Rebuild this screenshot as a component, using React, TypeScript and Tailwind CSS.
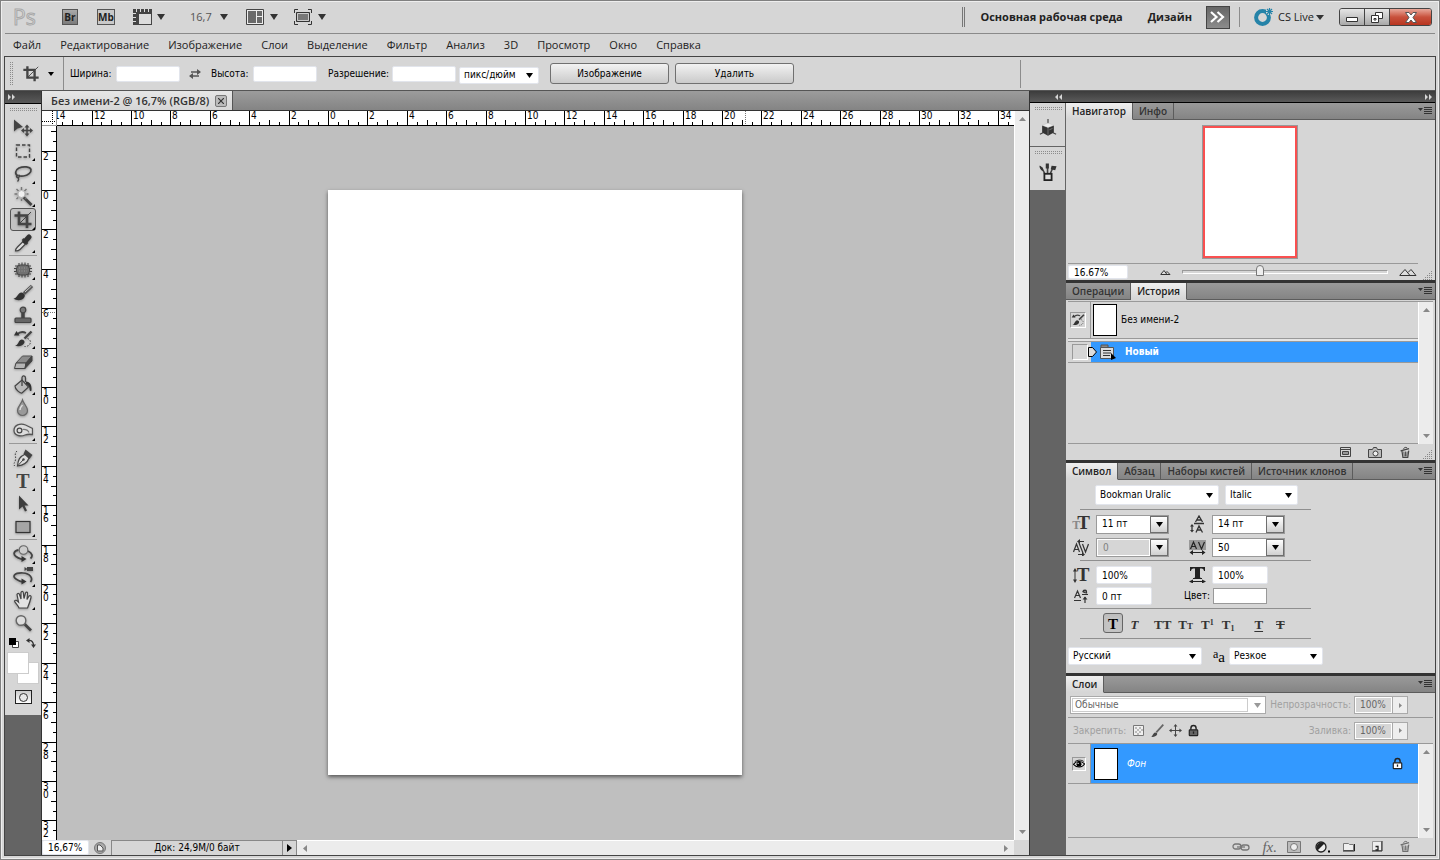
import { ReactNode, useState } from "react"
import clsx from "clsx"

const CM = 19.7
const PAGE_W = 415
const PAGE_H = 586

/* ---------- small shared pieces ---------- */

function Caret({ className = "text-[#333]", w = 7, h = 5 }: { className?: string; w?: number; h?: number }) {
  return (
    <svg width={w} height={h} viewBox="0 0 8 6" preserveAspectRatio="none" className={clsx("pointer-events-none shrink-0", className)} aria-hidden>
      <path d="M0 0h8L4 6z" fill="currentColor" />
    </svg>
  )
}

function Grip({ vertical = false }: { vertical?: boolean }) {
  return (
    <span
      className={clsx(
        "block shrink-0 bg-[linear-gradient(90deg,#d6d6d6_1px,transparent_1px),linear-gradient(#8c8c8c_1px,transparent_1px)] bg-[size:2px_2px]",
        vertical ? "h-6 w-1" : "h-[3px] w-7"
      )}
    />
  )
}

function Rule({ className = "h-6" }: { className?: string }) {
  return <span className={clsx("w-px shrink-0 bg-[#8c8c8c]", className)} />
}

function Field({ label, value = "", className }: { label: string; value?: string; className?: string }) {
  return (
    <input
      type="text"
      aria-label={label}
      defaultValue={value}
      className={clsx("shrink-0 rounded-[2px] border border-[#e2e5ec] bg-white px-[5px] text-black outline-none", className)}
    />
  )
}

function Select({ label, value, options = [], className, caret = "right-[5px]" }: {
  label: string
  value: string
  options?: string[]
  className?: string
  caret?: string
}) {
  return (
    <span className={clsx("relative flex shrink-0 items-center rounded-[2px] border border-[#e2e5ec] bg-white", className)}>
      <select aria-label={label} defaultValue={value} className="h-full w-full appearance-none bg-transparent pl-1 text-black outline-none">
        {[value, ...options].map((o) => (
          <option key={o}>{o}</option>
        ))}
      </select>
      <Caret className={clsx("absolute text-black", caret)} />
    </span>
  )
}

function Combo({ label, value, disabled = false }: { label: string; value: string; disabled?: boolean }) {
  return (
    <span className="flex h-[19px] w-[73px] shrink-0 border border-[#9a9a9a] bg-white">
      <input
        type="text"
        aria-label={label}
        defaultValue={value}
        disabled={disabled}
        className={clsx("min-w-0 flex-1 pl-[5px] outline-none", disabled ? "border border-white bg-[#d6d6d6] text-[#808080]" : "text-black")}
      />
      <button aria-label={label + ": список"} className="flex w-[18px] items-center justify-center border border-[#6e6e6e] bg-gradient-to-b from-white to-[#d0d0d0]">
        <Caret className="text-black" />
      </button>
    </span>
  )
}

function ScrollColumn({ className }: { className?: string }) {
  return (
    <div className={clsx("flex w-[15px] shrink-0 flex-col items-center justify-between border-l border-white bg-[#ececec] py-[6px]", className)}>
      <button aria-label="Вверх" className="text-[#888]">
        <svg width="7" height="4" viewBox="0 0 7 4" className="block"><path d="M0 4h7L3.5 0z" fill="currentColor" /></svg>
      </button>
      <button aria-label="Вниз" className="text-[#888]">
        <svg width="7" height="4" viewBox="0 0 7 4" className="block"><path d="M0 0h7L3.5 4z" fill="currentColor" /></svg>
      </button>
    </div>
  )
}

function Icon({ size = 20, children, className }: { size?: number; children: ReactNode; className?: string }) {
  return (
    <svg width={size} height={size} viewBox="0 0 20 20" fill="none" stroke="#444" strokeWidth="1.5" className={clsx("block shrink-0", className)} aria-hidden>
      {children}
    </svg>
  )
}

/* ---------- icons ---------- */

const cropArt = (
  <>
    <path d="M6 1.5V14h12.5M1.5 5.5H14V18" strokeWidth="2.600" />
    <path d="M6 14 18 2" strokeWidth="1" />
  </>
)

const brushHistoryArt = (
  <>
    <path d="M18.5 2.5 11.5 9.5" strokeWidth="2.4" />
    <path d="M2 16.5c3.5 0 3-5 6.500-6 2 0 3.500 1.500 3 3-1 3.500-6.500 4.500-9.500 3z" fill="#333" stroke="none" />
    <path d="M4 5.500c2.500-2.500 6-3 9-1.500" strokeWidth="1.800" />
    <path d="M1 6.500 3.500 2l3 4.500z" fill="#333" stroke="none" />
    <path d="M14.500 9.500c3.500 1 4 5 1 7-1.500 1-3 1.200-4 1" strokeWidth="1" strokeDasharray="1.500 1.500" />
  </>
)

const trashArt = (
  <>
    <path d="M4.500 7 6 17.500h7.500L15 7" fill="#ddd" strokeWidth="1.800" />
    <path d="M7.500 8.500 8 16M10 8.500V16M12.500 8.500 12 16" strokeWidth="1.400" />
    <path d="m2.500 7.500 13-3.500" strokeWidth="2.200" />
    <path d="M7 5c0-3 5-4 5.500-1.500" />
  </>
)

const lockArt = (
  <>
    <rect x="3.500" y="9" width="13" height="9" rx="1" fill="currentColor" stroke="#222" strokeWidth="1.800" />
    <path d="M6 9V6.500C6 1 14 1 14 6.500V9" stroke="#222" strokeWidth="2.200" />
    <path d="M10 11.500v3.500" stroke="#222" strokeWidth="2" />
  </>
)

type Tool = { name: string; art: ReactNode; more?: boolean }

const toolGroups: Tool[][] = [
  [
    {
      name: "Перемещение",
      more: false,
      art: (
        <>
          <path d="M1 1.500v12l3.500-3L10 9z" fill="#444" stroke="none" />
          <path d="M9.500 12.500h9M14 8v9" strokeWidth="1.500" />
          <path d="m14 6.500 2.500 3h-5zM14 18.500l2.500-3h-5zM8 12.500l3-2.500v5zM20 12.500 17 10v5z" fill="#444" stroke="none" />
        </>
      ),
    },
    { name: "Прямоугольная область", art: <rect x="3.500" y="4" width="13" height="12" strokeDasharray="3.500 2" strokeWidth="1.400" /> },
    {
      name: "Лассо",
      art: (
        <>
          <path d="M5 12c-3.500-2-3-6 1-8 4.500-2 11-1.500 12 1.500.5 3-3 6-7.500 6.500-2 .3-4 0-5-.5" strokeWidth="1.700" />
          <path d="M5.500 11c1.500.5 1 2.500-.5 2.500S3 12 4 11.500M4.500 13.500c2 1 1 3 0 4" strokeWidth="1.400" />
        </>
      ),
    },
    {
      name: "Волшебная палочка",
      art: (
        <>
          <path d="m10.500 10 8 8" strokeWidth="2.800" />
          <path d="M8.500 0v14M1.500 7h14M3.500 2l10 10M13.500 2l-10 10" stroke="#777" strokeWidth="1.400" strokeDasharray="3 1" />
          <circle cx="8.500" cy="7" r="3.500" fill="#f0f0f0" stroke="#bbb" strokeWidth="1" />
        </>
      ),
    },
    { name: "Рамка", art: cropArt },
    {
      name: "Пипетка",
      art: (
        <>
          <path d="M2.500 18c0-2 1-3 2-4l6-6 2.500 2.500-6 6c-1 1-2.500 1.500-4.500 1.500z" fill="#ddd" strokeWidth="1.200" />
          <path d="m9.500 6 5 5" strokeWidth="2.500" />
          <path d="m12 8.500 4-4.500" strokeWidth="5" strokeLinecap="round" stroke="#333" />
        </>
      ),
    },
  ],
  [
    {
      name: "Точечная восстанавливающая кисть",
      art: (
        <>
          <path d="M6 3v14M9 2.500v15M12 2.500v15M15 3v14M1 8.500h18M1 11.500h18M2 6h16M2 14h16" strokeWidth="1.100" />
          <rect x="3.500" y="5" width="13" height="10" rx="4" fill="#707070" stroke="#444" strokeWidth="1" />
          <path d="M6 8h8M6 11h8" stroke="#999" strokeWidth="1" strokeDasharray="1 1.500" />
        </>
      ),
    },
    {
      name: "Кисть",
      art: (
        <>
          <path d="M19 3 11 10.500" strokeWidth="3.200" stroke="#555" />
          <path d="M18.500 3 12 9" strokeWidth="1" stroke="#ccc" />
          <path d="M.5 15.500c4 0 4-6 8-6 2.800.5 4 2.500 3 4.500-2 4-8 4-11 1.500z" fill="#333" stroke="none" />
        </>
      ),
    },
    {
      name: "Штамп",
      art: (
        <>
          <circle cx="10" cy="4" r="2.800" fill="#777" strokeWidth="1.200" />
          <path d="M8.800 7v5h2.400V7" fill="#444" strokeWidth="1" />
          <rect x="2" y="12" width="16" height="4.500" rx="1" fill="#666" strokeWidth="1.200" />
        </>
      ),
    },
    { name: "Архивная кисть", art: brushHistoryArt },
    {
      name: "Ластик",
      art: (
        <>
          <path d="M9.500 4h9.500l-6 7H3z" fill="#8c8c8c" stroke="#555" strokeWidth="1" />
          <path d="M3 11h10l-1 5.500H1.500z" fill="#b5b5b5" stroke="#444" strokeWidth="1" />
          <path d="m13 11 6-7v5L12 16.500z" fill="#444" stroke="#444" strokeWidth="1" />
        </>
      ),
    },
    {
      name: "Заливка",
      art: (
        <>
          <path d="m2 11 7-6 6.500 7-6.500 6c-2 .5-7-4-7-7z" fill="#bbb" strokeWidth="1.200" />
          <path d="M9 11V3c0-3 3.500-2.500 3.500 0v4" strokeWidth="1.300" />
          <path d="M13 6.500c4 0 6 3.500 5.500 9-1 1.500-2 0-2-1.500 0-2-1-4-3.500-5z" fill="#333" stroke="none" />
        </>
      ),
    },
    {
      name: "Размытие",
      art: (
        <>
          <path d="M9.500 2c1 3.500 5 6.500 5 10.500a5 5 0 0 1-10 0C4.500 8.500 8.500 5.500 9.500 2z" fill="#999" stroke="#666" strokeWidth="1.200" />
          <path d="M7 12c0-2 1.500-4 2.500-5" stroke="#ddd" />
        </>
      ),
    },
    {
      name: "Осветлитель",
      art: (
        <>
          <path d="M1 9.500c0-5 6-8 11.500-5.500 3 1.500 5 2.500 7 3.500v6c-3-.5-5-.5-7.500.5C7.500 16 1 14.500 1 9.500z" fill="#dcdcdc" strokeWidth="1.300" stroke="#555" />
          <circle cx="6.500" cy="9.500" r="2.400" strokeWidth="1.200" />
          <path d="M9.500 8.500c3-.3 5.500.7 6.500 3" strokeWidth="1.200" stroke="#777" />
        </>
      ),
    },
  ],
  [
    {
      name: "Перо",
      art: (
        <>
          <path d="M4.500 18c.5-6 2-9.500 8-12l3.500 4c-2 5.500-6 7.500-11.500 8z" fill="#ddd" strokeWidth="1.200" />
          <path d="m12.500 1.500 7 5.500-3 4-6-5z" fill="#444" stroke="none" />
          <path d="M5 17.500 10 12" strokeWidth="1" />
          <circle cx="10.500" cy="11.500" r="1.200" fill="#444" stroke="none" />
          <path d="M4 3C.5 6 3.500 9 2.500 12s-2 3-1 6" strokeWidth="1" strokeDasharray="1.500 1.500" />
        </>
      ),
    },
    { name: "Текст", art: null },
    { name: "Выделение контура", art: <path d="M6 1.500v14l3.500-3 2.500 5 2-1-2.500-5h4z" fill="#3c3c3c" stroke="none" /> },
    { name: "Прямоугольник", art: <rect x="3" y="4.500" width="14" height="11" fill="#a5a5a5" stroke="#333" strokeWidth="1.200" /> },
  ],
  [
    {
      name: "Поворот 3D-объекта",
      art: (
        <>
          <path d="M5.500 6C.5 7 0 10 3 12.500s7 3 8 2.500M15 7c4.500 2 5 5.500 2.500 7.500" strokeWidth="1.800" />
          <path d="M8.500 12 13.500 15l-5 3z" fill="#333" stroke="none" />
          <circle cx="10.500" cy="6" r="4.300" fill="#cdcdcd" stroke="#666" strokeWidth="1.100" />
        </>
      ),
    },
    {
      name: "Поворот 3D-камеры",
      art: (
        <>
          <path d="M10 6C1 5.500-1 9.500 3 12s7 3 8 2.500M10 6c7 .5 10.500 5 7.500 9" strokeWidth="1.700" />
          <path d="m8.500 11.500 5 3-5 3z" fill="#333" stroke="none" />
          <rect x="14" y="0" width="6" height="4" fill="#444" stroke="none" />
          <path d="m11.500 0 3 2-3 2z" fill="#444" stroke="none" />
        </>
      ),
    },
    {
      name: "Рука",
      art: (
        <path
          d="M6 18c-1-3-3.500-4.500-4.500-7 1-1.500 2.500-.5 4 1L4 4.500c.5-1.500 2-1.500 2.500 0L8 9V2.500c.5-1.500 2-1.500 2.300 0L11 8.500l1.500-5.500c.7-1.500 2.300-1 2 .5L14 9.500l2-3.500c1-1 2.500-.3 2 1.500-.7 3-2 7-3.500 10.500z"
          fill="#e2e2e2"
          strokeWidth="1.200"
        />
      ),
    },
    {
      name: "Масштаб",
      more: false,
      art: (
        <>
          <path d="m11.500 11 6.500 6.500" strokeWidth="2.800" />
          <circle cx="8" cy="7.500" r="4.800" fill="#ddd" stroke="#666" strokeWidth="1.400" />
        </>
      ),
    },
  ],
]

/* ---------- top bars ---------- */

function TitleBar() {
  return (
    <div className="mx-1 flex h-[33px] shrink-0 items-center border-b border-[#8a8a8a] pl-2">
      <span className="w-[49px] text-[21px] leading-6 text-[#dedede] [-webkit-text-stroke:1px_#a8a8a8]">Ps</span>
      <button className="flex h-4 w-4 items-center justify-center border border-[#555] bg-gradient-to-b from-[#aaa] to-[#7b7b7b] text-[10px] font-bold text-[#222]">Br</button>
      <button className="ml-[19px] flex h-4 w-[18px] items-center justify-center border border-[#555] bg-[#c9c9c9] text-[10px] font-bold text-[#222]">Mb</button>
      <button aria-label="Показать элементы" className="ml-[18px] flex items-center gap-[5px]">
        <svg width="19" height="16" viewBox="0 0 19 16" aria-hidden>
          <path d="M0 0h19v16H0z" fill="#444" />
          <path d="M6 5h12v10H6z" fill="#dcdcdc" />
          <path d="M3.500 0v3M7.500 0v3M11.500 0v3M15.500 0v3M0 4.500h3M0 8.500h3M0 12.500h3" stroke="#ddd" />
        </svg>
        <Caret w={8} h={6} />
      </button>
      <button aria-label="Масштаб" className="ml-[25px] flex w-[38px] items-center justify-between text-[11px] text-[#555]">
        16,7
        <Caret w={8} h={6} />
      </button>
      <button aria-label="Упорядочить документы" className="ml-[18px] flex items-center gap-[6px]">
        <svg width="18" height="16" viewBox="0 0 18 16" aria-hidden>
          <path d="M.5.5h17v15H.5z" fill="#eee" stroke="#444" />
          <path d="M2 2h8v12H2zM11 2h5v5h-5zM11 8h5v6h-5z" fill="#6a6a6a" />
        </svg>
        <Caret w={8} h={6} />
      </button>
      <button aria-label="Режим экрана" className="ml-4 flex items-center gap-[6px]">
        <svg width="18" height="16" viewBox="0 0 18 16" fill="none" aria-hidden>
          <path d="M.5 4V.5H4M14 .5h3.500V4M17.500 12v3.500H14M4 15.500H.5V12" stroke="#333" />
          <path d="M2.500 3.500h13v9h-13z" fill="#777" stroke="#333" />
          <path d="M3.500 4.500h11v7h-11z" stroke="#ccc" />
        </svg>
        <Caret w={8} h={6} />
      </button>

      <div className="ml-auto flex items-center text-[11px] font-bold text-[#222]">
        <span className="h-5 w-[3px] border-x border-[#777]" />
        <button className="ml-[15px]">Основная рабочая среда</button>
        <button className="ml-[25px]">Дизайн</button>
        <button aria-label="Другие рабочие среды" className="ml-[14px] flex h-[23px] w-6 items-center justify-center border border-[#444] bg-gradient-to-b from-[#666] to-[#8c8c8c]">
          <svg width="15" height="12" viewBox="0 0 15 12" fill="none" stroke="#fff" strokeWidth="2.200" aria-hidden>
            <path d="m1 1 5.500 5L1 11M7.500 1 13 6l-5.500 5" />
          </svg>
        </button>
        <Rule className="ml-[9px] h-5" />
        <button className="ml-[14px] flex items-center font-normal">
          <svg width="20" height="18" viewBox="0 0 20 18" fill="none" aria-hidden>
            <circle cx="8.500" cy="9.500" r="6.400" stroke="#2583a8" strokeWidth="4" />
            <path d="M15.500 0v7M12 3.500h7M13 1l5 5M18 1l-5 5" stroke="#d6d6d6" strokeWidth="3" />
            <path d="M15.500 0v7M12 3.500h7M13 1l5 5M18 1l-5 5" stroke="#2583a8" strokeWidth="1.200" />
          </svg>
          <span className="ml-1 mr-[2px]">CS Live</span>
          <Caret w={8} h={5} />
        </button>
        <div className="ml-[15px] mr-[3px] flex h-[18px] overflow-hidden rounded-[3px] border border-[#444]">
          <button aria-label="Свернуть" className="flex w-[25px] items-center justify-center border-r border-[#444] bg-gradient-to-b from-[#e5e5e5] via-[#c8c8c8] to-[#a8a8a8]">
            <svg width="12" height="5" viewBox="0 0 12 5" className="mt-1"><path d="M.5.5h11v4H.5z" fill="#fff" stroke="#333" /></svg>
          </button>
          <button aria-label="Развернуть" className="flex w-[25px] items-center justify-center border-r border-[#444] bg-gradient-to-b from-[#e5e5e5] via-[#c8c8c8] to-[#a8a8a8]">
            <svg width="12" height="11" viewBox="0 0 12 11" fill="#fff" stroke="#333">
              <path d="M4.500.5h7v6h-7z" /><path d="M.5 3.500h7v7h-7z" /><path d="M3 6.500h2v1.500H3z" />
            </svg>
          </button>
          <button aria-label="Закрыть" className="flex w-[41px] items-center justify-center bg-gradient-to-b from-[#e8a79a] via-[#c8513c] to-[#b8341f]">
            <svg width="12" height="11" viewBox="0 0 12 11">
              <path d="M.5.5H4L6 3l2-2.500h3.500L8 5.500l3.500 5H8L6 8l-2 2.500H.5L4 5.500z" fill="#fff" stroke="#555" />
            </svg>
          </button>
        </div>
      </div>
    </div>
  )
}

const menus = ["Файл", "Редактирование", "Изображение", "Слои", "Выделение", "Фильтр", "Анализ", "3D", "Просмотр", "Окно", "Справка"]

function MenuBar() {
  return (
    <nav className="flex h-[22px] shrink-0 items-center gap-[19px] pl-3 text-[11px] text-[#222]">
      {menus.map((m) => (
        <button key={m}>{m}</button>
      ))}
    </nav>
  )
}

function OptionsBar() {
  const push = "h-[21px] w-[119px] shrink-0 rounded-[3px] border border-[#707070] bg-gradient-to-b from-[#f2f2f2] to-[#cacaca] text-black"
  return (
    <div className="flex h-[34px] shrink-0 items-center border-b border-[#555] pl-1 text-black">
      <Grip vertical />
      <button aria-label="Инструмент Рамка" className="ml-[9px] flex items-center gap-2">
        <Icon size={18}>{cropArt}</Icon>
        <Caret className="text-black" w={6} h={4} />
      </button>
      <Rule className="ml-[9px] h-full" />
      <label className="ml-[6px] flex w-[110px] items-center justify-between">
        Ширина:
        <Field label="Ширина" className="h-4 w-16" />
      </label>
      <button aria-label="Поменять местами" className="ml-[9px]">
        <svg width="12" height="10" viewBox="0 0 12 10" className="block" fill="none" stroke="#555" strokeWidth="1.500">
          <path d="M2 3h9M1 7h9" /><path d="m8 0 4 3-4 3zM4 4 0 7l4 3z" fill="#555" stroke="none" />
        </svg>
      </button>
      <label className="ml-[10px] flex w-[106px] items-center justify-between">
        Высота:
        <Field label="Высота" className="h-4 w-16" />
      </label>
      <Rule className="ml-1" />
      <label className="ml-[6px] flex w-32 items-center justify-between">
        Разрешение:
        <Field label="Разрешение" className="h-4 w-16" />
      </label>
      <Select label="Единицы" value="пикс/дюйм" options={["пикс/см"]} className="ml-[3px] mt-[3px] h-[17px] w-20" />
      <Rule className="ml-1" />
      <button className={clsx(push, "ml-[6px]")}>Изображение</button>
      <button className={clsx(push, "ml-[6px]")}>Удалить</button>
      <Rule className="ml-[5px]" />
      <Rule className="ml-[220px] h-7" />
    </div>
  )
}

/* ---------- tools ---------- */

function ToolBox() {
  const [active, setActive] = useState("Рамка")
  return (
    <aside className="flex w-[37px] shrink-0 flex-col border-r border-[#333] bg-[#646464]">
      <button aria-label="Свернуть панель" className="flex h-[13px] items-center border-b border-black bg-gradient-to-b from-[#3f3f3f] to-[#5a5a5a] pl-[3px]">
        <DoubleArrow />
      </button>
      <div className="flex flex-col items-center bg-[#d6d6d6] pb-[11px] pt-1">
        <Grip />
        <div className="mt-[5px] w-full">
          {toolGroups.map((group, gi) => (
            <div key={gi}>
              {gi > 0 && <hr className="mx-1 mb-[2px] mt-px border-[#999]" />}
              {group.map((t) => (
                <button
                  key={t.name}
                  aria-label={t.name}
                  onClick={() => setActive(t.name)}
                  className={clsx(
                    "relative mx-auto flex h-[23px] w-[26px] items-center justify-center rounded-[3px] border",
                    active === t.name ? "border-[#555] bg-[#c2c2c2]" : "border-transparent"
                  )}
                >
                  {t.art ? (
                    <Icon className="drop-shadow-[0_1px_1px_rgba(0,0,0,0.3)]">{t.art}</Icon>
                  ) : (
                    <span className="font-['Liberation_Serif',serif] text-[20px] font-bold leading-5 text-[#444]">T</span>
                  )}
                  {t.more !== false && (
                    <svg width="3" height="3" viewBox="0 0 3 3" className="absolute bottom-0 right-0"><path d="M3 0v3H0z" fill="#000" /></svg>
                  )}
                </button>
              ))}
            </div>
          ))}
        </div>
        <div className="mt-1 flex w-full items-center justify-between pl-1 pr-[5px]">
          <button aria-label="Цвета по умолчанию">
            <svg width="10" height="10" viewBox="0 0 10 10" className="block"><path d="M3.500 3.500h6v6h-6z" fill="#fff" stroke="#444" /><path d="M0 0h7v7H0z" fill="#000" /></svg>
          </button>
          <button aria-label="Поменять цвета">
            <svg width="10" height="10" viewBox="0 0 10 10" className="block" fill="none" stroke="#333">
              <path d="M2.500 2.500c3-.5 5 1.500 5 5" strokeWidth="1.300" /><path d="M0 2.500 3.500 0v5zM7.500 10 5 6.500h5z" fill="#333" stroke="none" />
            </svg>
          </button>
        </div>
        <div className="relative mt-1 h-8 w-8">
          <button aria-label="Фоновый цвет" className="absolute bottom-0 right-0 h-[22px] w-[22px] border border-[#ccc] bg-white" />
          <button aria-label="Основной цвет" className="absolute left-0 top-0 h-[22px] w-[22px] border border-[#ccc] bg-white" />
        </div>
        <button aria-label="Быстрая маска" className="mt-[6px] flex h-[14px] w-[17px] items-center justify-center border border-[#222] bg-gradient-to-b from-[#ccc] to-white">
          <span className="h-[9px] w-[9px] rounded-full border border-[#333] bg-[#e8e8e8]" />
        </button>
      </div>
    </aside>
  )
}

function DoubleArrow({ left = false }: { left?: boolean }) {
  return (
    <svg width="7" height="6" viewBox="0 0 7 6" className={clsx("block", left && "rotate-180")} fill="#d6d6d6" aria-hidden>
      <path d="M0 0l3 3-3 3zM4 0l3 3-3 3z" />
    </svg>
  )
}

/* ---------- document ---------- */

// half-centimetre steps counted from the zero mark
const steps = (from: number, to: number) => Array.from({ length: to - from + 1 }, (_, i) => from + i)

function RulerTop() {
  return (
    <svg className="block h-[15px] w-full border-b border-black bg-white" fontSize="10" aria-label="Горизонтальная линейка">
      <svg x="50%" overflow="visible">
        {steps(-28, 69).map((s) => {
          const x = Math.round((s * CM) / 2) - PAGE_W / 2
          const major = s % 4 === 0
          return (
            <g key={s}>
              <rect x={x} y={major ? 0 : s % 2 === 0 ? 9 : 11} width="1" height="15" />
              {major && <text x={x + 2} y="8">{Math.abs(s / 2)}</text>}
            </g>
          )
        })}
        <path d="M210 0v15" stroke="#777" strokeDasharray="1 1" />
      </svg>
    </svg>
  )
}

function RulerLeft() {
  return (
    <svg className="h-full w-[15px] shrink-0 border-r border-black bg-white" fontSize="10" aria-label="Вертикальная линейка">
      <svg y="50%" overflow="visible">
        {steps(-6, 65).map((s) => {
          const y = Math.round((s * CM) / 2) - PAGE_H / 2
          const major = s % 4 === 0
          return (
            <g key={s}>
              <rect x={major ? 0 : s % 2 === 0 ? 9 : 11} y={y} width="15" height="1" />
              {major &&
                String(Math.abs(s / 2))
                  .split("")
                  .map((d, i) => <text key={i} x="1" y={y + 9 + i * 8}>{d}</text>)}
            </g>
          )
        })}
        <path d="M0-170.500h15" stroke="#777" strokeDasharray="1 1" />
      </svg>
    </svg>
  )
}

function DocumentArea() {
  return (
    <main className="flex min-w-0 flex-1 flex-col">
      <div className="flex h-5 shrink-0 border-b border-[#333] bg-gradient-to-b from-[#9c9c9c] to-[#848484]">
        <div className="flex items-center gap-[6px] border-r border-[#555] bg-gradient-to-b from-[#e6e6e6] to-[#d6d6d6] pl-[9px] pr-[5px] font-['Open_Sans',sans-serif] text-[11px] font-semibold text-[#333]">
          Без имени-2 @ 16,7% (RGB/8)
          <button aria-label="Закрыть документ" className="flex h-3 w-3 items-center justify-center rounded-[2px] border border-[#777] bg-[#bbb]">
            <svg width="6" height="6" viewBox="0 0 6 6" stroke="#333" strokeWidth="1.200"><path d="m0 0 6 6M6 0 0 6" /></svg>
          </button>
        </div>
      </div>
      <div className="flex min-h-0 flex-1">
        <div className="flex min-w-0 flex-1 flex-col">
          <div className="flex">
            <svg width="15" height="15" viewBox="0 0 15 15" className="shrink-0 bg-white" fill="none" aria-hidden>
              <path d="M10.500 0v15M0 10.500h15" stroke="#000" strokeDasharray="1 1" />
              <path d="M0 14.500h14.500V0" stroke="#999" />
            </svg>
            <div className="min-w-0 flex-1"><RulerTop /></div>
          </div>
          <div className="flex min-h-0 flex-1">
            <RulerLeft />
            <div className="flex min-w-0 flex-1 items-center justify-center overflow-hidden bg-[#bfbfbf] pb-px pr-px">
              <div className="h-[585px] w-[414px] shrink-0 bg-white shadow-[0_2px_4px_rgba(0,0,0,0.55)]" />
            </div>
          </div>
        </div>
        <ScrollColumn />
      </div>
      <div className="flex h-[15px] shrink-0 items-stretch bg-[#d6d6d6] text-black">
        <Field label="Масштаб документа" value="16,67%" className="w-[47px]" />
        <button aria-label="Version Cue" className="flex w-[22px] items-center justify-center">
          <svg width="12" height="12" viewBox="0 0 12 12" fill="#aaa" stroke="#777">
            <circle cx="6" cy="6" r="5.500" /><path d="M3.500 3h2.500l3 3v3H3.500z" fill="#eee" stroke="#555" />
          </svg>
        </button>
        <div className="flex w-[172px] items-center justify-center border-x border-t border-[#888]">Док: 24,9M/0 байт</div>
        <button aria-label="Сведения" className="flex w-[14px] items-center justify-center border-r border-t border-[#888]">
          <svg width="5" height="8" viewBox="0 0 5 8"><path d="M0 0v8l5-4z" /></svg>
        </button>
        <div className="flex flex-1 items-center justify-between border-t border-white bg-[#ececec] px-[6px]">
          <button aria-label="Влево"><svg width="4" height="7" viewBox="0 0 4 7" className="block" fill="#888"><path d="M4 0v7L0 3.500z" /></svg></button>
          <button aria-label="Вправо"><svg width="4" height="7" viewBox="0 0 4 7" className="block" fill="#888"><path d="M0 0v7l4-3.500z" /></svg></button>
        </div>
        <span className="w-[15px]" />
      </div>
    </main>
  )
}

/* ---------- panels ---------- */

function Panel({ tabs, active, className, children }: { tabs: string[]; active: string; className?: string; children: ReactNode }) {
  return (
    <section className={clsx("flex shrink-0 flex-col bg-[#d6d6d6]", className)}>
      <div className="flex h-[17px] shrink-0 bg-gradient-to-b from-[#9a9a9a] to-[#838383] font-['Open_Sans',sans-serif] text-[10px] font-semibold">
        {tabs.map((t) => (
          <button
            key={t}
            className={clsx(
              "border-b border-r border-r-[#5c5c5c] px-[6px] leading-4",
              t === active ? "border-b-[#d6d6d6] bg-gradient-to-b from-[#efefef] to-[#d6d6d6] text-[#222]" : "border-b-[#5c5c5c] text-[#333]"
            )}
          >
            {t}
          </button>
        ))}
        <div className="flex flex-1 items-center justify-end border-b border-[#5c5c5c] pr-[3px]">
          <button aria-label="Меню панели">
            <svg width="14" height="8" viewBox="0 0 14 8" className="block"><path d="M0 1h5L2.500 4z" fill="#333" /><path d="M6 .5h8M6 2.500h8M6 4.500h8M6 6.500h8" stroke="#333" /></svg>
          </button>
        </div>
      </div>
      {children}
    </section>
  )
}

function ResizeCorner() {
  return (
    <svg width="10" height="10" viewBox="0 0 10 10" className="shrink-0 self-end" fill="none" stroke="#888" strokeDasharray="1 1" aria-hidden>
      <path d="M8 1.500h2M6 3.500h4M4 5.500h6M2 7.500h8M0 9.500h10" />
    </svg>
  )
}

function Navigator() {
  return (
    <Panel tabs={["Навигатор", "Инфо"]} active="Навигатор" className="h-[177px]">
      <div className="flex flex-1 items-start justify-center pr-px pt-[5px]">
        <div className="h-[134px] w-24 border border-[#999] bg-white">
          <div className="h-full w-full border-2 border-[#f95050]" />
        </div>
      </div>
      <div className="ml-[2px] mr-[17px] h-px bg-[#999]" />
      <div className="flex h-4 items-center px-[2px]">
        <Field label="Масштаб навигатора" value="16.67%" className="h-[14px] w-[60px]" />
        <button aria-label="Уменьшить" className="ml-[32px]">
          <svg width="11" height="6" viewBox="0 0 11 6" className="block" fill="#ddd" stroke="#333"><path d="m5 4.500 2-2 3 3" /><path d="M1 5.500h9M.5 5.500 4 1.500l3 4" /></svg>
        </button>
        <input
          type="range"
          aria-label="Масштаб"
          min={0}
          max={100}
          defaultValue={37}
          className="mx-[11px] h-3 min-w-0 flex-1 appearance-none bg-transparent [&::-webkit-slider-runnable-track]:h-1 [&::-webkit-slider-runnable-track]:border [&::-webkit-slider-runnable-track]:border-b-white [&::-webkit-slider-runnable-track]:border-l-[#999] [&::-webkit-slider-runnable-track]:border-r-white [&::-webkit-slider-runnable-track]:border-t-[#999] [&::-webkit-slider-thumb]:-mt-[6px] [&::-webkit-slider-thumb]:h-[11px] [&::-webkit-slider-thumb]:w-2 [&::-webkit-slider-thumb]:appearance-none [&::-webkit-slider-thumb]:rounded-t-full [&::-webkit-slider-thumb]:border [&::-webkit-slider-thumb]:border-[#777] [&::-webkit-slider-thumb]:bg-[#eee]"
        />
        <button aria-label="Увеличить" className="mr-[6px]">
          <svg width="18" height="8" viewBox="0 0 18 8" className="block" fill="#ddd" stroke="#333"><path d="m9 4.500 3-3 5 6" /><path d="M1 7.500h16M.5 7.500 6 1.500l5 6" /></svg>
        </button>
        <ResizeCorner />
      </div>
    </Panel>
  )
}

function History() {
  return (
    <Panel tabs={["Операции", "История"]} active="История" className="h-[177px]">
      <div className="mx-[2px] mt-px flex min-h-0 flex-1 border-t border-[#999]">
        <div className="flex flex-1 flex-col border-b border-[#999] text-black">
          <div className="flex h-9 items-center">
            <span className="flex h-full w-[23px] items-center justify-end border-r border-[#999] pr-1">
              <span className="border border-b-white border-l-[#999] border-r-white border-t-[#999]"><Icon size={14}>{brushHistoryArt}</Icon></span>
            </span>
            <span className="ml-[2px] h-8 w-6 border border-black bg-white" />
            <span className="ml-1">Без имени-2</span>
          </div>
          <div className="h-1 border-y border-[#999] bg-[#e5e5e5]" />
          <div className="flex h-[21px] border-b border-[#999]">
            <span className="relative flex w-[23px] items-center justify-center">
              <span className="h-4 w-4 border border-b-white border-l-[#999] border-r-white border-t-[#999]" />
              <svg width="9" height="10" viewBox="0 0 9 10" className="absolute -right-[6px]"><path d="M.5.5h4l4 4.500-4 4.500h-4z" fill="#ddd" stroke="#000" /></svg>
            </span>
            <button className="flex flex-1 items-center bg-[#3399ff] pl-[9px] font-bold text-white">
              <svg width="16" height="16" viewBox="0 0 16 16" aria-hidden>
                <path d="M1 1h7v3H1z" fill="#888" stroke="#555" /><path d="M.5 3.500h13v11H.5z" fill="#ddd" stroke="#555" />
                <path d="M3 6.500h8M3 9h8M3 11.500h7" stroke="#333" /><path d="m11 9 5 5-5 2z" fill="#000" />
              </svg>
              <span className="ml-[9px]">Новый</span>
            </button>
          </div>
        </div>
        <ScrollColumn />
      </div>
      <div className="flex h-4 items-center justify-end gap-[17px] pr-[2px]">
        <button aria-label="Новый документ">
          <svg width="11" height="10" viewBox="0 0 11 10" className="block" fill="none" stroke="#444"><path d="M.5.5h10v9H.5zM1 2.500h9" /><path d="M2.500 4.500h6v3h-6z" fill="#999" /></svg>
        </button>
        <button aria-label="Новый снимок">
          <svg width="14" height="11" viewBox="0 0 14 11" className="block" fill="#bbb" stroke="#444"><path d="M.5 2.500h4l1-2h3l1 2h4v8H.5z" /><circle cx="7.500" cy="6.500" r="2.500" fill="#eee" /></svg>
        </button>
        <span className="flex items-end gap-[11px]">
          <button aria-label="Удалить состояние"><Icon size={13}>{trashArt}</Icon></button>
          <ResizeCorner />
        </span>
      </div>
    </Panel>
  )
}

const serif = "font-['Liberation_Serif',serif] text-[#333]"

function Line() {
  return <div className="ml-[14px] h-px w-[231px] shrink-0 bg-[#8f8f8f]" />
}

function Glyph({ children, className }: { children: ReactNode; className?: string }) {
  return <span className={clsx("flex w-[30px] shrink-0 items-center justify-center", className)}>{children}</span>
}

function Character() {
  return (
    <Panel tabs={["Символ", "Абзац", "Наборы кистей", "Источник клонов"]} active="Символ" className="h-[210px] text-black">
      <div className="flex gap-[6px] pb-1 pl-[29px] pt-[5px]">
        <Select label="Гарнитура" value="Bookman Uralic" className="h-5 w-[124px]" />
        <Select label="Начертание" value="Italic" className="h-5 w-[73px]" />
      </div>
      <Line />
      <div className="flex h-[28px] items-center">
        <Glyph>
          <span className={clsx(serif, "flex items-baseline font-bold leading-5")}><span className="-mr-[3px] text-[12px] text-[#888]">T</span><span className="text-[19px]">T</span></span>
        </Glyph>
        <Combo label="Кегль" value="11 пт" />
        <Glyph className="ml-[13px]">
          <svg width="14" height="18" viewBox="0 0 14 18" fill="none" stroke="#333" strokeWidth="1.300" aria-hidden>
            <path d="m5.500 7 3.500-6 3.500 6M6.500 5h5M6 17.500l3-6.500 3.500 6.500M7 15h4.500M4 8.500h10M2 10v6" /><path d="M0 11.500 2 9l2 2.500zM0 15l2 2.500L4 15z" fill="#333" stroke="none" />
          </svg>
        </Glyph>
        <Combo label="Интерлиньяж" value="14 пт" />
      </div>
      <div className="flex h-[19px] items-center">
        <Glyph>
          <svg width="16" height="17" viewBox="0 0 16 17" fill="none" stroke="#333" strokeWidth="1.200" aria-hidden>
            <path d="m.5 13 3-8 3 8M1.500 10.500h4M9.500 5l3 8 3-8M10 14 6 4M5 2.500h6M5 15.500h6" /><path d="M7 0v5L4 2.500zM9 13v5l3-2.500z" fill="#333" stroke="none" />
          </svg>
        </Glyph>
        <Combo label="Кернинг" value="0" disabled />
        <Glyph className="ml-[13px]">
          <svg width="17" height="15" viewBox="0 0 17 15" fill="none" stroke="#222" strokeWidth="1.200" aria-hidden>
            <path d="M0 0h17v10H0z" fill="#999" stroke="none" /><path d="m1.500 9 3-7 3 7M2.500 6.500h4M9.500 2l3 7 3-7M2 12.500h13" /><path d="M4 10v5l-3.500-2.500zM13 10v5l3.500-2.500z" fill="#222" stroke="none" />
          </svg>
        </Glyph>
        <Combo label="Трекинг" value="50" />
      </div>
      <div className="pb-[5px] pt-[3px]"><Line /></div>
      <div className="flex items-center">
        <Glyph>
          <svg width="4" height="15" viewBox="0 0 4 15" aria-hidden><path d="M2 2v11" stroke="#333" /><path d="M0 3.500 2 0l2 3.500zM0 11.500 2 15l2-3.500z" fill="#333" /></svg>
          <span className={clsx(serif, "text-[19px] font-bold leading-4")}>T</span>
        </Glyph>
        <Field label="Масштаб по вертикали" value="100%" className="h-[18px] w-14" />
        <Glyph className="ml-[30px]">
          <svg width="17" height="16" viewBox="0 0 17 16" aria-hidden>
            <path d="M1 0h15v4h-1c-.5-2-1-2.500-4-2.500V10c0 .7.5 1 2 1v1H4v-1c1.500 0 2-.3 2-1V1.500C3 1.500 2.500 2 2 4H1z" fill="#222" /><path d="M2 14.500h13" stroke="#222" /><path d="M4 12.500v4L0 14.500zM13 12.500v4l4-2z" fill="#222" />
          </svg>
        </Glyph>
        <Field label="Масштаб по горизонтали" value="100%" className="h-[18px] w-14" />
      </div>
      <div className="mt-[3px] flex items-center pb-[3px]">
        <Glyph>
          <svg width="14" height="14" viewBox="0 0 14 14" fill="none" stroke="#333" strokeWidth="1.200" aria-hidden>
            <path d="m.5 9 3-7 3 7M1.500 6.500h4M0 11.500h7M8 5.500h6M9 1.500c3-1 3.500 0 3.500 1.500V4c-4-.5-4-1.800-3-2 1-.3 3 0 3 0M11 8v6" /><path d="m8.500 10.500 2.500-3 2.500 3z" fill="#333" stroke="none" />
          </svg>
        </Glyph>
        <Field label="Смещение базовой линии" value="0 пт" className="h-[18px] w-14" />
        <span className="ml-[32px] w-[29px]">Цвет:</span>
        <button aria-label="Цвет текста" className="h-4 w-[54px] border border-[#999] bg-white" />
      </div>
      <Line />
      <div className={clsx(serif, "flex h-[29px] items-baseline pl-[37px] pt-1 text-[13px] font-bold leading-4")}>
        <button className="mr-[7px] flex h-5 w-5 items-center justify-center rounded-[3px] border border-[#666] bg-[#c4c4c4] pt-px text-[15px] text-black shadow-inner">T</button>
        <button className="mr-[15px] w-[9px] italic">T</button>
        <button className="mr-[7px]">TT</button>
        <button className="mr-[8px]">T<span className="text-[9px]">T</span></button>
        <button className="mr-[8px]">T<span className="align-[4px] text-[8px] leading-none">1</span></button>
        <button className="mr-5">T<span className="align-[-2px] text-[8px] leading-none">1</span></button>
        <button className="mr-[13px] underline underline-offset-2">T</button>
        <button className="line-through">T</button>
      </div>
      <Line />
      <div className="mt-[8px] flex items-center pl-[2px]">
        <Select label="Язык" value="Русский" className="h-[18px] w-[134px]" />
        <span className={clsx(serif, "ml-[11px] w-4 shrink-0 whitespace-nowrap text-[15px] leading-4 text-black")}><span className="align-[4px] text-[12px] leading-none">a</span>a</span>
        <Select label="Сглаживание" value="Резкое" className="h-[18px] w-[94px]" />
      </div>
    </Panel>
  )
}

function Percent({ label }: { label: string }) {
  return (
    <label className="flex items-center gap-[3px] text-[#a0a0a0]">
      {label}:
      <span className="flex h-[18px] w-[54px] border border-[#aaa] bg-white">
        <input aria-label={label} defaultValue="100%" disabled className="w-[37px] border border-white bg-[#d6d6d6] pl-1 text-[#666]" />
        <button aria-label={label + ": ползунок"} className="flex flex-1 items-center justify-center border-l border-[#aaa] bg-[#eee]">
          <svg width="3" height="5" viewBox="0 0 3 5"><path d="M0 0v5l3-2.500z" fill="#888" /></svg>
        </button>
      </span>
    </label>
  )
}

function Layers() {
  return (
    <Panel tabs={["Слои"]} active="Слои" className="min-h-[179px] flex-1">
      <div className="flex h-[24px] items-center justify-between pl-1 pr-[27px]">
        <span className="relative flex h-[18px] w-[196px] items-center border border-[#aaa] bg-white">
          <select aria-label="Режим наложения" disabled className="ml-px h-[14px] w-[176px] appearance-none border border-[#ccc] pl-[2px] text-[#666] opacity-100">
            <option>Обычные</option>
          </select>
          <Caret className="absolute right-1 text-[#999]" />
        </span>
        <Percent label="Непрозрачность" />
      </div>
      <div className="mx-[2px] flex h-[27px] items-center border-y border-[#999] pl-[5px] pr-[25px]">
        <span className="mr-[7px] text-[#a0a0a0]">Закрепить:</span>
        <button aria-label="Прозрачные пикселы">
          <svg width="11" height="11" viewBox="0 0 11 11" className="block"><path d="M.5.5h10v10H.5z" fill="#f0f0f0" stroke="#777" /><path d="M2 2h2v2H2zM6 2h2v2H6zM4 4h2v2H4zM8 4h2v2H8zM2 6h2v2H2zM6 6h2v2H6zM4 8h2v2H4z" fill="#bbb" /></svg>
        </button>
        <button aria-label="Пикселы изображения" className="ml-[6px]"><Icon size={14}>
          <path d="M19 1 9 12" strokeWidth="2.500" stroke="#666" /><path d="M1 18c3 0 3-5 6-6 3 0 4 2 3 3.500-2 3-6 3.500-9 2.500z" fill="#444" stroke="none" />
        </Icon></button>
        <button aria-label="Положение" className="ml-[5px]"><Icon size={13}>
          <path d="M10 2v16M2 10h16" /><path d="m10 0 3 4H7zM10 20l3-4H7zM0 10l4-3v6zM20 10l-4-3v6z" fill="#444" stroke="none" />
        </Icon></button>
        <button aria-label="Закрепить все" className="ml-[5px] text-[#666]"><Icon size={13}>{lockArt}</Icon></button>
        <span className="ml-auto"><Percent label="Заливка" /></span>
      </div>
      <div className="mx-[2px] flex min-h-0 flex-1">
        <div className="flex flex-1 flex-col border-b border-[#999]">
          <div className="flex h-10 border-b border-[#999]">
            <button aria-label="Видимость слоя" className="flex w-[23px] items-center justify-center border-r border-[#999]">
              <svg width="14" height="14" viewBox="0 0 14 14" className="border border-b-white border-l-[#999] border-r-white border-t-[#999]">
                <path d="M.5 7.500C3 3.500 10 2.500 13.500 7 11 11.500 4 11.500.5 7.500z" fill="#ddd" stroke="#000" strokeWidth="1.200" /><circle cx="7" cy="7.200" r="2.900" /><path d="M2 4.500C5 2 10 2 12.500 4" fill="none" stroke="#000" /><circle cx="6" cy="6.200" r=".8" fill="#fff" />
              </svg>
            </button>
            <button className="flex flex-1 items-center bg-[#3399ff] pl-[3px] pr-[14px] italic text-white">
              <span className="h-8 w-6 border border-black bg-white" />
              <span className="ml-[9px]">Фон</span>
              <Icon size={13} className="ml-auto text-white">{lockArt}</Icon>
            </button>
          </div>
        </div>
        <ScrollColumn />
      </div>
      <div className="flex h-[17px] items-center justify-end pr-[23px]">
        <button aria-label="Связать слои" className="mr-3">
          <svg width="18" height="8" viewBox="0 0 18 8" className="block" fill="none" stroke="#777" strokeWidth="1.300"><rect x="1" y="1" width="8" height="5" rx="2.500" /><rect x="9" y="2" width="8" height="5" rx="2.500" /><path d="M5 4h8" /></svg>
        </button>
        <button aria-label="Стиль слоя" className={clsx(serif, "mr-[10px] text-[15px] italic leading-4 !text-[#666]")}>fx.</button>
        <button aria-label="Слой-маска" className="mr-[14px]">
          <svg width="14" height="12" viewBox="0 0 14 12" className="block"><path d="M.5.5h13v11H.5z" fill="#bbb" stroke="#777" /><circle cx="7" cy="6" r="3.500" fill="#eee" stroke="#777" /></svg>
        </button>
        <button aria-label="Корректирующий слой" className="mr-3">
          <svg width="16" height="12" viewBox="0 0 16 12" className="block"><circle cx="6" cy="6" r="5" fill="#eee" stroke="#222" strokeWidth="1.300" /><path d="M2.500 9.500a5 5 0 0 1 7-7z" fill="#222" /><path d="M13 9.500h2v2h-2z" /></svg>
        </button>
        <button aria-label="Новая группа" className="mr-[17px]">
          <svg width="12" height="10" viewBox="0 0 12 10" className="block"><path d="M.5 1.500h5l1 1h4v6H.5z" fill="#eee" stroke="#777" /><path d="M0 9h11.500V2" stroke="#222" fill="none" /></svg>
        </button>
        <button aria-label="Новый слой" className="mr-4">
          <svg width="11" height="11" viewBox="0 0 11 11" className="block" fill="none"><path d="M.5.5h9v9h-9z" fill="#eee" stroke="#999" /><path d="M10 0v10H0" stroke="#222" /><path d="M3.500 5.500H6V9H3.500" stroke="#222" strokeWidth="1.300" /></svg>
        </button>
        <button aria-label="Удалить слой"><Icon size={13} className="opacity-70">{trashArt}</Icon></button>
      </div>
    </Panel>
  )
}

function Dock() {
  return (
    <aside className="flex w-[406px] shrink-0 flex-col border-l border-[#333] bg-[#646464]">
      <div className="flex h-3 shrink-0 items-center border-b border-black bg-gradient-to-b from-[#3c3c3c] to-[#5a5a5a] pl-[25px] pr-[3px]">
        <button aria-label="Развернуть значки"><DoubleArrow left /></button>
        <button aria-label="Свернуть панели" className="ml-auto"><DoubleArrow /></button>
      </div>
      <div className="flex min-h-0 flex-1">
        <div className="flex w-9 shrink-0 flex-col gap-px pr-px">
          <button aria-label="3D" className="flex h-[43px] flex-col items-center gap-[9px] bg-[#d6d6d6] pt-1">
            <Grip />
            <Icon size={18}>
              <path d="M10 0v6M1 17l5-2.500M19 17l-5-2.500" strokeWidth="1.300" />
              <path d="m10 9.500 6.500-2.500v8L10 18.500 3.500 15V7z" fill="#333" stroke="none" />
              <path d="m10 4.500 6.500 2.500L10 9.500 3.500 7z" fill="#eee" stroke="#bbb" strokeWidth=".5" />
              <path d="M10 10v7.500M11.500 12l3.500-1.500" stroke="#777" strokeWidth="1" />
            </Icon>
          </button>
          <button aria-label="Наборы кистей" className="flex h-[43px] flex-col items-center gap-[9px] bg-[#d6d6d6] pt-1">
            <Grip />
            <Icon size={18}>
              <path d="M6.500 12 3 5M9.500 12V5M12.500 12l3-7" strokeWidth="1.800" /><path d="M.5 3c2 0 4.500 3 4 6C1.500 8 .5 5 .5 3zM7.500.5h3.500V6H7.500zM13 7l1-4 5.500.5L18 8z" fill="#333" stroke="none" /><rect x="6" y="12" width="8" height="7" fill="#ddd" stroke="#222" strokeWidth="2" />
            </Icon>
          </button>
        </div>
        <div className="flex min-w-0 flex-1 flex-col gap-[3px] bg-[#333]">
          <Navigator />
          <History />
          <Character />
          <Layers />
        </div>
      </div>
    </aside>
  )
}

export default function App() {
  return (
    <div className="flex h-screen min-h-[860px] min-w-[1200px] flex-col border border-[#808080] bg-[#d6d6d6] font-['Open_Sans',sans-serif] shadow-[inset_0_0_0_1px_#eee]">
      <TitleBar />
      <MenuBar />
      <div className="mx-[3px] mb-[3px] flex min-h-0 flex-1 flex-col border border-[#444] font-['DejaVu_Sans_Condensed','DejaVu_Sans',sans-serif] text-[10px] leading-3">
        <OptionsBar />
        <div className="flex min-h-0 flex-1">
          <ToolBox />
          <DocumentArea />
          <Dock />
        </div>
      </div>
    </div>
  )
}
